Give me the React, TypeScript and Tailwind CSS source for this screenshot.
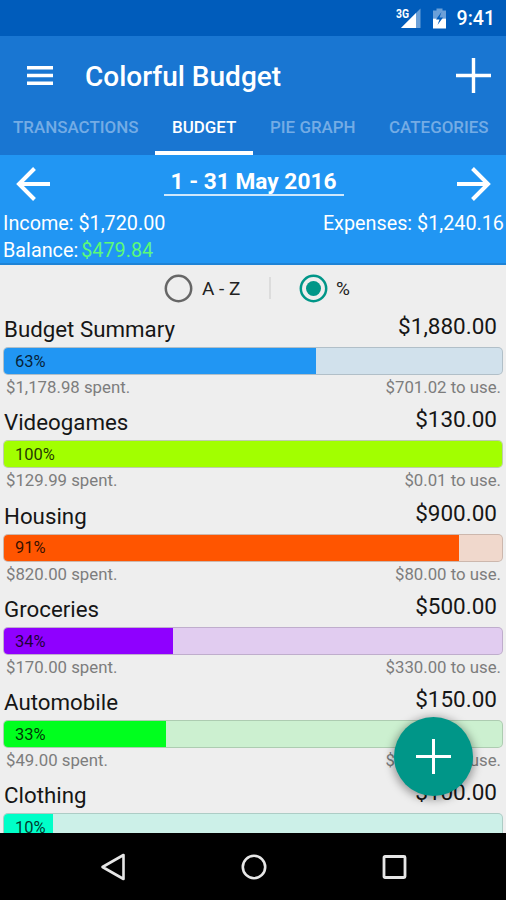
type Budget = {
  name: string;
  total: string;
  percent: string;
  fill: number;
  spent?: string;
  left?: string;
  bar: string;
  track: string;
};

const budgets: Budget[] = [
  { name: "Budget Summary", total: "$1,880.00", percent: "63%", fill: 312, spent: "$1,178.98 spent.", left: "$701.02 to use.", bar: "bg-[#2196f3]", track: "bg-[#d1e1ec]" },
  { name: "Videogames", total: "$130.00", percent: "100%", fill: 500, spent: "$129.99 spent.", left: "$0.01 to use.", bar: "bg-[#a2ff00]", track: "bg-[#e0f0c8]" },
  { name: "Housing", total: "$900.00", percent: "91%", fill: 455, spent: "$820.00 spent.", left: "$80.00 to use.", bar: "bg-[#ff5500]", track: "bg-[#f0d8cc]" },
  { name: "Groceries", total: "$500.00", percent: "34%", fill: 169, spent: "$170.00 spent.", left: "$330.00 to use.", bar: "bg-[#8f00ff]", track: "bg-[#e1ccf0]" },
  { name: "Automobile", total: "$150.00", percent: "33%", fill: 162, spent: "$49.00 spent.", left: "$101.00 to use.", bar: "bg-[#00ff1e]", track: "bg-[#ccf0d0]" },
  { name: "Clothing", total: "$100.00", percent: "10%", fill: 49, bar: "bg-[#00ffc8]", track: "bg-[#ccf0e8]" },
];

function StatusBar() {
  return (
    <div className="flex h-9 shrink-0 items-center justify-end bg-[#005cbb] pr-[11px] text-white">
      <svg width="52" height="36" viewBox="0 0 52 36" className="mr-[9px]">
        <path d="M24.500 8.500V28H5Z" fill="#6ba0d8" />
        <path d="M20 13V28H5Z" fill="#fff" />
        <path d="M37 10.500h3.500v-2h6v2h3.500v8h-13z" fill="#6ba0d8" />
        <path d="M37 18.500h13v10h-13z" fill="#fff" />
        <path d="m45.500 12-5.500 7.500h3.500L41.500 25l5.500-7.500H43.500z" fill="#005cbb" />
        <text x="0" y="17.500" fontSize="12" fontWeight="700" fontFamily="Roboto, sans-serif" fill="#fff" textLength="13" lengthAdjust="spacingAndGlyphs">3G</text>
      </svg>
      <span className="pt-[2px] text-[19.500px] leading-9 font-medium">9:41</span>
    </div>
  );
}

function AppBar() {
  return (
    <div className="flex h-[119px] shrink-0 flex-col bg-[#1976d2]">
      <div className="flex h-20 items-center pr-[15px] pl-[27px] text-white">
        <svg width="26" height="20" viewBox="0 0 26 20" className="mr-[32px]" fill="#fff">
          <path d="M0 0h26v3.500H0zM0 7.700h26v3.500H0zM0 15.400h26v3.500H0z" />
        </svg>
        <h1 className="flex-1 pt-[1px] text-[28px] leading-none font-medium">Colorful Budget</h1>
        <svg width="35" height="35" viewBox="0 0 35 35" stroke="#fff" strokeWidth="3.400" className="mb-[2px]">
          <path d="M17.500 0v35M0 17.500h35" />
        </svg>
      </div>
      <nav className="flex h-[39px] text-[16.950px] leading-[23px] font-medium whitespace-nowrap text-[#74ace5]">
        <span className="w-[155px] pl-[13px]">TRANSACTIONS</span>
        <span className="w-[98px] border-b-4 border-white pl-[17px] text-white">BUDGET</span>
        <span className="w-[119px] pl-[17px]">PIE GRAPH</span>
        <span className="pl-[17px]">CATEGORIES</span>
      </nav>
    </div>
  );
}

function Arrow({ flip = false }: { flip?: boolean }) {
  return (
    <svg width="34" height="34" viewBox="0 0 34 34" fill="none" stroke="#fff" strokeWidth="4" className={flip ? "mt-[3px] rotate-180" : "mt-[3px]"}>
      <path d="M18.500 1.500 3 17l15.500 15.500M3 17h31" />
    </svg>
  );
}

function Period() {
  return (
    <div className="flex h-[110px] shrink-0 flex-col border-b-2 border-[#1e83d6] bg-[#2196f3] text-white">
      <div className="flex h-[54px] shrink-0 items-center justify-between pr-[15px] pl-4">
        <Arrow />
        <span className="mb-[1px] h-[28px] w-[180px] border-b-2 border-[#cfe8fc] text-center text-[22.700px] leading-[28px] font-bold whitespace-nowrap">1 - 31 May 2016</span>
        <Arrow flip />
      </div>
      <div className="flex shrink-0 justify-between pt-[2px] pr-[2px] pl-[3px] text-[19.800px] leading-[26px] whitespace-nowrap">
        <span>Income: $1,720.00</span>
        <span>Expenses: $1,240.16</span>
      </div>
      <div className="flex shrink-0 gap-[3px] pl-[3px] text-[19.800px] leading-[27px] whitespace-nowrap">
        <span>Balance:</span>
        <span className="text-[#5cfa78]">$479.84</span>
      </div>
    </div>
  );
}

function SortOptions() {
  return (
    <div className="flex h-[46px] shrink-0 items-center pl-[164px] text-[19px] text-[#222]">
      <svg width="29" height="29" viewBox="0 0 29 29" fill="none">
        <circle cx="14.500" cy="14.500" r="12.700" stroke="#666" strokeWidth="2.500" />
      </svg>
      <span className="ml-[9px] w-[67px] pt-[2px]">A - Z</span>
      <span className="h-[22px] w-[2px] bg-[#dcdcdc]" />
      <svg width="29" height="29" viewBox="0 0 29 29" fill="none" className="ml-[28px]">
        <circle cx="14.500" cy="14.500" r="12.700" stroke="#009688" strokeWidth="2.500" />
        <circle cx="14.500" cy="14.500" r="7.500" fill="#009688" />
      </svg>
      <span className="ml-[8px] pt-[2px]">%</span>
    </div>
  );
}

function BudgetRow({ b }: { b: Budget }) {
  return (
    <div className="h-[93.300px] shrink-0">
      <div className="flex h-9 justify-between pr-[9px] pl-[4px] text-[#161616]">
        <span className="pt-[5px] text-[22.300px] leading-[26px]">{b.name}</span>
        <span className="pt-[2px] text-[22.500px] leading-[26px]">{b.total}</span>
      </div>
      <div className={`mx-[3px] h-[28px] overflow-hidden rounded-[5px] border border-black/15 ${b.track}`}>
        <div className={`flex h-full items-center pt-[2px] pl-[11px] text-[16.500px] text-black/80 ${b.bar}`} style={{ width: b.fill }}>
          {b.percent}
        </div>
      </div>
      {b.spent && (
        <div className="flex justify-between pt-[2px] pr-[5px] pl-[6px] text-[16.800px] leading-[20px] text-[#7d7d7d]">
          <span>{b.spent}</span>
          <span>{b.left}</span>
        </div>
      )}
    </div>
  );
}

function NavigationBar() {
  return (
    <div className="flex h-[67px] shrink-0 items-center justify-between bg-black pr-[99px] pl-[100px]">
      <svg width="26" height="28" viewBox="0 0 26 28" fill="none" stroke="#e6e6e6" strokeWidth="2.600" strokeLinejoin="round">
        <path d="M23.500 2v24L2.500 14z" />
      </svg>
      <svg width="26" height="26" viewBox="0 0 26 26" fill="none" stroke="#e6e6e6" strokeWidth="2.600">
        <circle cx="13" cy="13" r="11.200" />
      </svg>
      <svg width="26" height="26" viewBox="0 0 26 26" fill="none" stroke="#e6e6e6" strokeWidth="2.800">
        <rect x="3" y="2.500" width="21" height="21" rx="1" />
      </svg>
    </div>
  );
}

export default function App() {
  return (
    <div className="relative flex h-[900px] w-[506px] flex-col overflow-hidden bg-[#eeeeee] font-['Roboto',sans-serif]">
      <StatusBar />
      <AppBar />
      <Period />
      <SortOptions />
      <div className="flex min-h-0 flex-1 flex-col overflow-hidden">
        {budgets.map((b) => (
          <BudgetRow key={b.name} b={b} />
        ))}
      </div>
      <NavigationBar />
      <button className="absolute top-[717px] left-[394px] flex h-[79px] w-[79px] items-center justify-center rounded-full bg-[#009688] shadow-[0_2px_8px_2px_rgba(0,0,0,0.35)]">
        <svg width="35" height="35" viewBox="0 0 35 35" stroke="#fff" strokeWidth="3">
          <path d="M17.500 0v35M0 17.500h35" />
        </svg>
      </button>
    </div>
  );
}
